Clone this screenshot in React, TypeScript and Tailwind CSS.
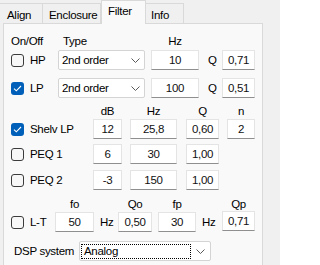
import React from "react";

function Check({ checked }: { checked?: boolean }) {
  return checked ? (
    <span className="flex h-[13px] w-[13px] shrink-0 items-center justify-center rounded-[3px] bg-[#005fb8]">
      <svg width="9" height="7" viewBox="0 0 9 7" fill="none">
        <path d="M1 3.6 L3.3 5.8 L8 1" stroke="#fff" strokeWidth="1.1" />
      </svg>
    </span>
  ) : (
    <span className="block h-[13px] w-[13px] shrink-0 rounded-[3px] border border-[#3b3b3b] bg-[#f7f7f7]" />
  );
}

function Box({ value, className }: { value: string; className: string }) {
  return (
    <div
      className={`flex h-[20px] shrink-0 items-center justify-center border border-[#e4e4e4] border-b-[#8f8f8f] bg-white text-[#111] ${className}`}
    >
      {value}
    </div>
  );
}

function Chevron() {
  return (
    <svg width="9" height="5" viewBox="0 0 9 5" fill="none" className="shrink-0">
      <path d="M0.5 0.5 L4.5 4.5 L8.5 0.5" stroke="#5a5a5a" strokeWidth="1" />
    </svg>
  );
}

function Combo({ value }: { value: string }) {
  return (
    <div className="flex h-[20px] w-[87px] shrink-0 items-center justify-between rounded-[2px] border border-[#d4d4d4] bg-white pl-[3px] pr-[4px]">
      <span>{value}</span>
      <Chevron />
    </div>
  );
}

function Tab({ label, active, className }: { label: string; active?: boolean; className: string }) {
  if (active) {
    return (
      <div
        className={`relative z-10 -mb-px h-[24px] border border-b-0 border-[#d9d9d9] bg-[#f9f9f9] pt-[3px] ${className}`}
      >
        {label}
      </div>
    );
  }
  return (
    <div className={`h-[20px] border border-b-0 border-[#d9d9d9] bg-[#f0f0f0] pt-[4px] ${className}`}>
      {label}
    </div>
  );
}

export default function App() {
  return (
    <div className="h-[265px] w-[280px] overflow-hidden bg-[#f0f0f0] font-['Liberation_Sans',Arial,sans-serif] text-[11.5px] leading-[15px] tracking-[-0.3px] text-black">
      {/* Tabs */}
      <div className="flex h-[23px] items-end">
        <Tab label="Align" className="w-[43px] border-l-0 pl-[7px]" />
        <Tab label="Enclosure" className="w-[58px] border-l-0 pl-[6px]" />
        <Tab label="Filter" active className="w-[45px] pl-[6px]" />
        <Tab label="Info" className="w-[38px] border-l-0 pl-[5px]" />
      </div>

      {/* Tab page */}
      <div className="ml-[3px] h-[260px] w-[260px] border border-[#d9d9d9] bg-[#f9f9f9]">
        {/* HP / LP */}
        <div className="mt-[10px] flex pl-[7px]">
          <span className="w-[52px]">On/Off</span>
          <span className="w-[88px]">Type</span>
          <span className="w-[48px] text-center">Hz</span>
        </div>
        {[
          { label: "HP", on: false, hz: "10", q: "0,71" },
          { label: "LP", on: true, hz: "100", q: "0,51" },
        ].map((r, i) => (
          <div key={r.label} className={`flex items-center pl-[7px] ${i === 0 ? "mt-[1px]" : "mt-[8px]"}`}>
            <Check checked={r.on} />
            <span className="ml-[6px] w-[28px]">{r.label}</span>
            <Combo value="2nd order" />
            <Box value={r.hz} className="ml-[6px] w-[48px]" />
            <span className="ml-[9px] w-[14px]">Q</span>
            <Box value={r.q} className="w-[33px]" />
          </div>
        ))}

        {/* Shelving / PEQ */}
        <div className="mt-[6px] flex pl-[89px]">
          <span className="w-[29px] text-center">dB</span>
          <span className="ml-[8px] w-[47px] text-center">Hz</span>
          <span className="ml-[9px] w-[33px] text-center">Q</span>
          <span className="ml-[8px] w-[28px] text-center">n</span>
        </div>
        {[
          { label: "Shelv LP", on: true, db: "12", hz: "25,8", q: "0,60", n: "2" },
          { label: "PEQ 1", on: false, db: "6", hz: "30", q: "1,00" },
          { label: "PEQ 2", on: false, db: "-3", hz: "150", q: "1,00" },
        ].map((r, i) => (
          <div
            key={r.label}
            className={`flex items-center pl-[7px] ${i === 0 ? "mt-0" : i === 1 ? "mt-[5px]" : "mt-[6px]"}`}
          >
            <Check checked={r.on} />
            <span className="ml-[6px] w-[63px]">{r.label}</span>
            <Box value={r.db} className="w-[29px]" />
            <Box value={r.hz} className="ml-[8px] w-[47px]" />
            <Box value={r.q} className="ml-[9px] w-[33px]" />
            {r.n && <Box value={r.n} className="ml-[8px] w-[28px]" />}
          </div>
        ))}

        {/* Linkwitz transform */}
        <div className="mt-[7px] flex pl-[51px]">
          <span className="w-[39px] text-center">fo</span>
          <span className="ml-[24px] w-[34px] text-center">Qo</span>
          <span className="ml-[6px] w-[38px] text-center">fp</span>
          <span className="ml-[26px] w-[33px] text-center">Qp</span>
        </div>
        <div className="flex items-center pl-[7px]">
          <Check />
          <span className="ml-[6px] w-[25px]">L-T</span>
          <Box value="50" className="w-[39px]" />
          <span className="w-[24px] pl-[6px]">Hz</span>
          <Box value="0,50" className="w-[34px]" />
          <Box value="30" className="ml-[6px] w-[38px]" />
          <span className="w-[26px] pl-[6px]">Hz</span>
          <Box value="0,71" className="-mt-[2px] w-[33px]" />
        </div>

        {/* DSP system */}
        <div className="mt-[9px] flex items-center pl-[10px]">
          <span className="w-[65px]">DSP system</span>
          <div className="flex h-[20px] w-[132px] items-center rounded-[2px] border border-[#d4d4d4] bg-white pl-[1px] pr-[5px]">
            <span className="flex h-[15px] w-[110px] items-center border border-dotted border-black pl-[2px]">
              Analog
            </span>
            <span className="ml-auto">
              <Chevron />
            </span>
          </div>
        </div>
      </div>
    </div>
  );
}
